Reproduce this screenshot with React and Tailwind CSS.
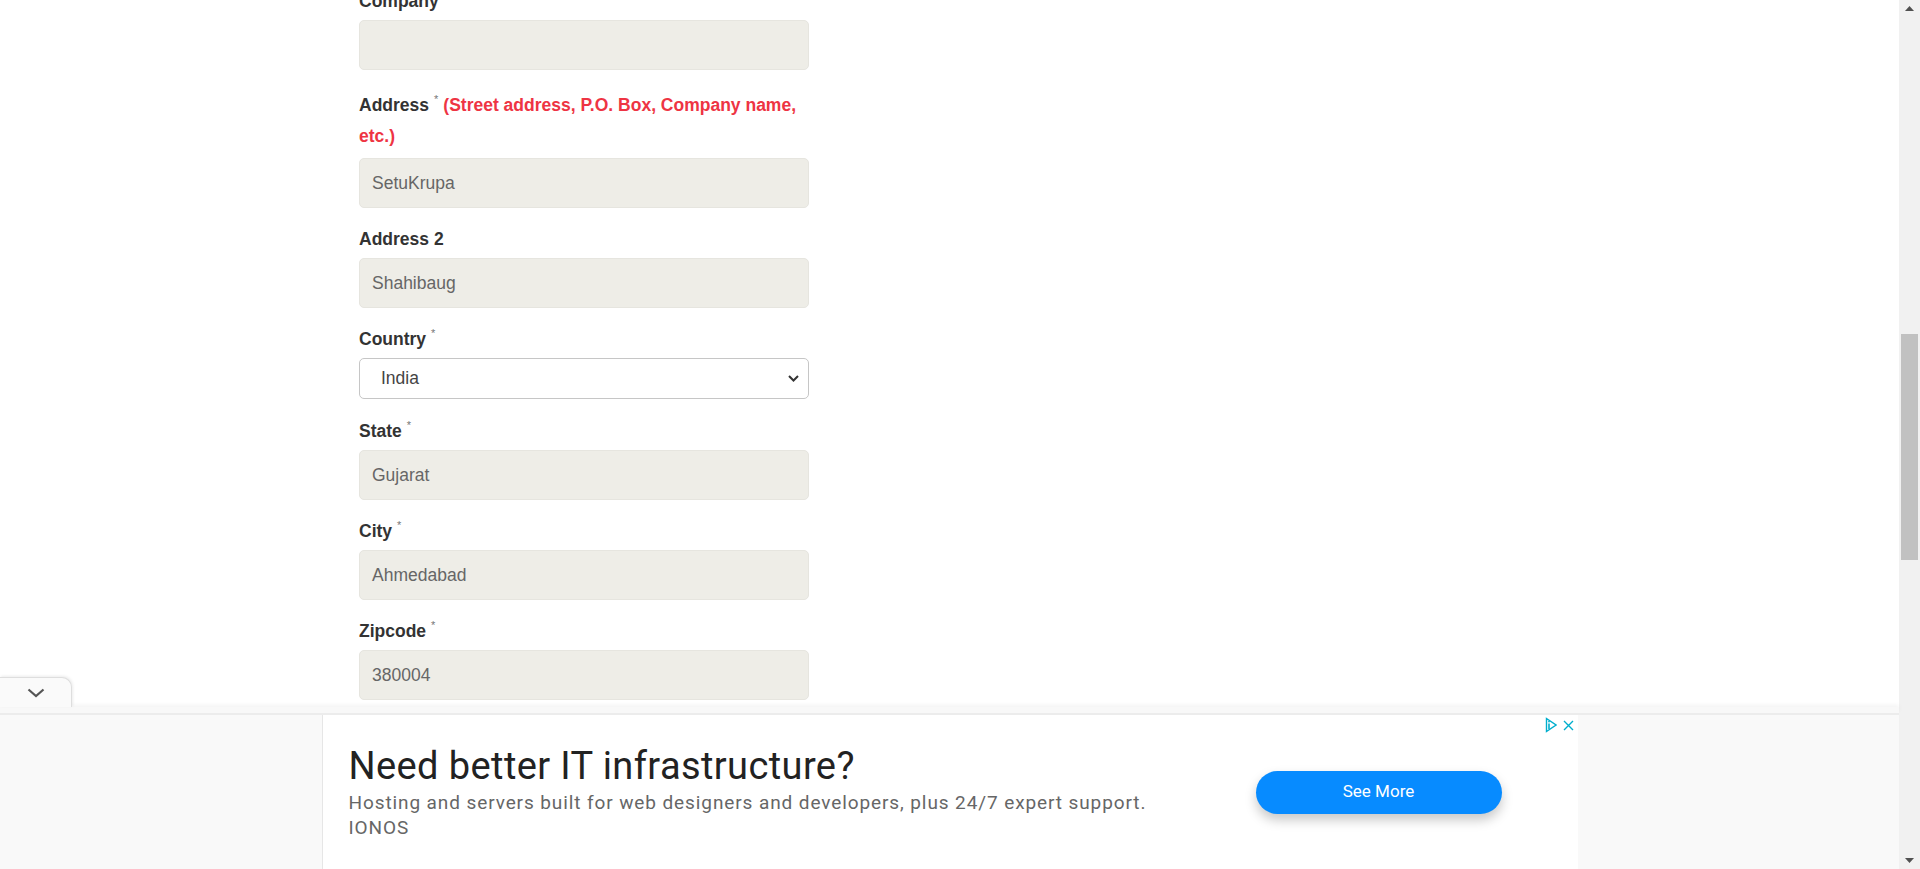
import React from 'react';

const labelFont = { fontFamily: '"Liberation Sans", Arial, sans-serif' };

function Star() {
    return <span className="relative -top-[8px] ml-[5px] text-[11px] leading-none font-normal text-[#777]">*</span>;
}

function Field({ label, required, value }) {
    return (
        <div className="mb-[20px]">
            <div className="mb-[8px] text-[17.5px] font-bold leading-[22px] text-[#333]">
                {label}
                {required && <Star />}
            </div>
            <div className="flex h-[50px] items-center rounded-[5px] border border-[#e6e5df] bg-[#eeede7] px-[12px] text-[17.5px] text-[#666]">
                {value}
            </div>
        </div>
    );
}

function AdAnchor() {
    return (
        <div className="relative h-[162px] shrink-0" style={{ fontFamily: 'Roboto, "Noto Sans", sans-serif' }}>
            {/* collapse tab */}
            <div className="absolute bottom-full left-0 flex h-[30px] w-[72px] items-center justify-center rounded-tr-[10px] border-t border-r border-[#dedede] bg-[#fafafa] shadow-[1px_-1px_3px_rgba(0,0,0,0.08)]">
                <svg width="18" height="10" viewBox="0 0 18 10" fill="none">
                    <path d="M1.5 1.5 L9 8 L16.5 1.5" stroke="#555" strokeWidth="2.2" />
                </svg>
            </div>
            <div className="h-[6px] bg-[#f8f8f8] shadow-[0_-2px_4px_rgba(0,0,0,0.05)]" />
            <div className="h-[2px] bg-[#ececec]" />
            <div className="flex h-[154px] justify-center bg-[#f9f9f9]">
                <div className="relative flex w-[1256px] items-center justify-between border-l border-[#e6e6e6] bg-white pl-[26px] pr-[76px]">
                    <div className="flex flex-col">
                        <div className="text-[38px] leading-[42px] tracking-[0.4px] text-[#222]">Need better IT infrastructure?</div>
                        <div className="mt-[3px] text-[19px] leading-[25px] tracking-[0.9px] text-[#666]">
                            Hosting and servers built for web designers and developers, plus 24/7 expert support.
                        </div>
                        <div className="text-[19px] leading-[25px] tracking-[0.9px] text-[#666]">IONOS</div>
                    </div>
                    <button className="flex h-[43px] w-[246px] items-center justify-center rounded-full bg-[#078bff] text-[17px] text-white shadow-[0_6px_12px_rgba(0,0,0,0.22)]">
                        See More
                    </button>
                    <div className="absolute right-[4px] top-[2px] flex items-center gap-[6px]">
                        <svg width="12" height="16" viewBox="0 0 12 16" fill="none">
                            <path d="M1.5 1.5 L11 8 L1.5 14.5 Z" stroke="#00aecd" strokeWidth="1.4" />
                            <path d="M4 6.5 V12" stroke="#00aecd" strokeWidth="1.6" />
                            <circle cx="4" cy="4.6" r="0.9" fill="#00aecd" />
                        </svg>
                        <svg width="11" height="11" viewBox="0 0 11 11" fill="none">
                            <path d="M1 1 L10 10 M10 1 L1 10" stroke="#00aecd" strokeWidth="1.4" />
                        </svg>
                    </div>
                </div>
            </div>
        </div>
    );
}

function Scrollbar() {
    return (
        <div className="flex w-[21px] shrink-0 flex-col bg-[#f1f1f1]">
            <div className="flex h-[17px] items-center justify-center">
                <svg width="9" height="5" viewBox="0 0 9 5"><path d="M0 5 L4.5 0 L9 5 Z" fill="#505050" /></svg>
            </div>
            <div className="flex flex-1 flex-col items-center">
                <div className="mt-[317px] h-[226px] w-[17px] bg-[#c1c1c1]" />
            </div>
            <div className="flex h-[17px] items-center justify-center">
                <svg width="9" height="5" viewBox="0 0 9 5"><path d="M0 0 L4.5 5 L9 0 Z" fill="#505050" /></svg>
            </div>
        </div>
    );
}

export default function App() {
    return (
        <div className="flex h-[869px] w-[1920px] overflow-hidden bg-white" style={labelFont}>
            <div className="flex min-w-0 flex-1 flex-col">
                <main className="flex-1 overflow-hidden">
                    <div className="-mt-[10px] ml-[359px] w-[450px]">
                        <Field label="Company" required value="" />
                        <div className="mb-[20px]">
                            <div className="mb-[6px] text-[17.5px] font-bold leading-[31px] text-[#333]">
                                Address
                                <Star />
                                <span className="ml-[5px] text-[#ee3443]">(Street address, P.O. Box, Company name, etc.)</span>
                            </div>
                            <div className="flex h-[50px] items-center rounded-[5px] border border-[#e6e5df] bg-[#eeede7] px-[12px] text-[17.5px] text-[#666]">
                                SetuKrupa
                            </div>
                        </div>
                        <Field label="Address 2" value="Shahibaug" />
                        <div className="mb-[21px]">
                            <div className="mb-[8px] text-[17.5px] font-bold leading-[22px] text-[#333]">
                                Country
                                <Star />
                            </div>
                            <div className="relative">
                                <select
                                    defaultValue="India"
                                    className="h-[41px] w-full appearance-none rounded-[5px] border border-[#c6c6c6] bg-white pl-[21px] text-[17.5px] text-[#444] outline-none"
                                    style={labelFont}
                                >
                                    <option>India</option>
                                </select>
                                <svg className="pointer-events-none absolute right-[10px] top-[17px]" width="11" height="7" viewBox="0 0 11 7" fill="none">
                                    <path d="M1 1 L5.5 5.5 L10 1" stroke="#333" strokeWidth="2" />
                                </svg>
                            </div>
                        </div>
                        <Field label="State" required value="Gujarat" />
                        <Field label="City" required value="Ahmedabad" />
                        <Field label="Zipcode" required value="380004" />
                    </div>
                </main>
                <AdAnchor />
            </div>
            <Scrollbar />
        </div>
    );
}
